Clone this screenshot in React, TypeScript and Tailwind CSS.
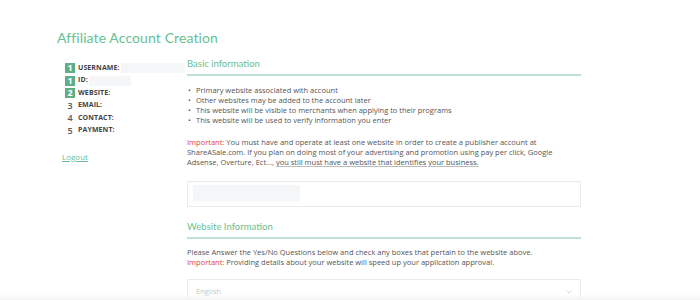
import React from "react";

const steps = [
  { n: "1", label: "USERNAME:", done: true, blur: 64 },
  { n: "1", label: "ID:", done: true, blur: 42 },
  { n: "2", label: "WEBSITE:", done: true, blur: 0 },
  { n: "3", label: "EMAIL:", done: false, blur: 0 },
  { n: "4", label: "CONTACT:", done: false, blur: 0 },
  { n: "5", label: "PAYMENT:", done: false, blur: 0 },
];

export default function App() {
  return (
    <div className="w-[700px] h-[300px] overflow-hidden bg-white relative" style={{ fontFamily: '"Open Sans", sans-serif' }}>
      <div className="pl-[57px] pt-[28px]">
        <h1 className="text-[14px] leading-[20px] text-[#67bf95] tracking-[0.1px]" style={{ fontFamily: 'Lato, sans-serif' }}>
          Affiliate Account Creation
        </h1>
        <div className="flex mt-[10px]">
          <div className="w-[130px] shrink-0 pl-[8px]">
            <div className="flex flex-col gap-[2.5px] pt-[5px]">
              {steps.map((s, i) => (
                <div key={i} className="flex items-center h-[10px]">
                  {s.done ? (
                    <span className="w-[10px] h-[10px] bg-[#5fae88] text-white text-[9px] leading-[10px] font-bold flex items-center justify-center">{s.n}</span>
                  ) : (
                    <span className="w-[10px] h-[10px] text-[#555] text-[9px] leading-[10px] font-semibold flex items-center justify-center">{s.n}</span>
                  )}
                  <span className="ml-[3px] text-[7px] font-bold text-[#444] tracking-[0.1px]">{s.label}</span>
                  {s.blur > 0 && <span className="ml-[1px] h-[10px] bg-[#f5f6f7]" style={{ width: s.blur }} />}
                </div>
              ))}
            </div>
            <a className="block mt-[15px] -ml-[3px] text-[8px] text-[#67bf95] underline">Logout</a>
          </div>
          <div className="w-[394px]">
            <h2 className="text-[9.5px] leading-[12px] text-[#67bf95] pb-[4px] border-b-2 border-[#bfe2d2]" style={{ fontFamily: 'Lato, sans-serif' }}>
              Basic information
            </h2>
            <ul className="mt-[9px] text-[7.5px] leading-[10px] text-[#555]">
              <li className="flex"><span className="w-[9px] pl-[1px]">•</span>Primary website associated with account</li>
              <li className="flex"><span className="w-[9px] pl-[1px]">•</span>Other websites may be added to the account later</li>
              <li className="flex"><span className="w-[9px] pl-[1px]">•</span>This website will be visible to merchants when applying to their programs</li>
              <li className="flex"><span className="w-[9px] pl-[1px]">•</span>This website will be used to verify information you enter</li>
            </ul>
            <p className="mt-[12px] text-[7.5px] leading-[10px] text-[#555] pr-[20px]">
              <span className="text-[#e03b3b]">Important:</span> You must have and operate at least one website in order to create a publisher account at ShareASale.com. If you plan on doing most of your advertising and promotion using pay per click, Google Adsense, Overture, Ect..., <span className="underline decoration-[#bbb]">you still must have a website that identifies your business.</span>
            </p>
            <div className="mt-[14px] h-[26px] border border-[#ebebeb] px-[5px] py-[3px]">
              <div className="w-[107px] h-[16px] bg-[#f5f6f7]" />
            </div>
            <h2 className="mt-[14px] text-[9.5px] leading-[12px] text-[#67bf95] pb-[4px] border-b-2 border-[#bfe2d2]" style={{ fontFamily: 'Lato, sans-serif' }}>
              Website Information
            </h2>
            <p className="mt-[8px] text-[7.5px] leading-[10px] text-[#555]">
              Please Answer the Yes/No Questions below and check any boxes that pertain to the website above.<br />
              <span className="text-[#e03b3b]">Important:</span> Providing details about your website will speed up your application approval.
            </p>
            <div className="mt-[12px] h-[26px] border border-[#ebebeb] flex items-center justify-between px-[8px]">
              <span className="text-[7.5px] text-[#c8c8c8]">English</span>
              <svg width="6" height="4" viewBox="0 0 6 4"><path d="M0.5 0.5 L3 3 L5.5 0.5" fill="none" stroke="#ccc" strokeWidth="0.8" /></svg>
            </div>
          </div>
        </div>
      </div>
      <div className="absolute left-0 right-0 bottom-0 h-[6px] bg-gradient-to-b from-transparent to-[#f4f4f4]" />
    </div>
  );
}
